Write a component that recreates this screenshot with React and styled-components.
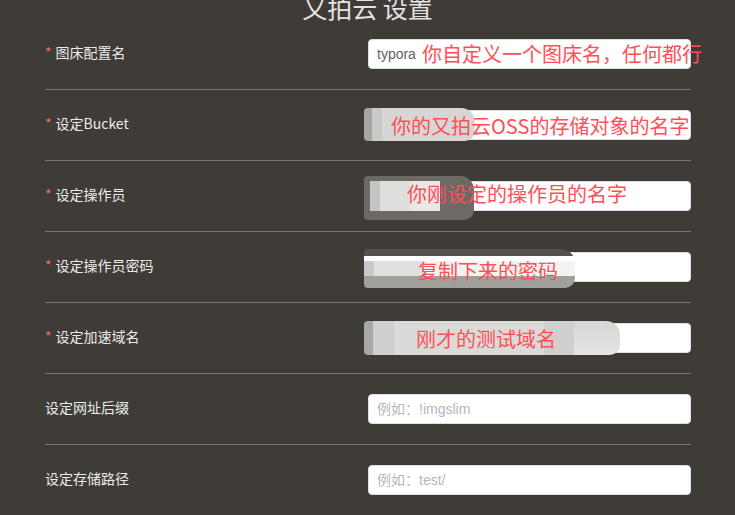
import React from 'react';
import styled, { createGlobalStyle } from 'styled-components';

const GlobalStyle = createGlobalStyle`
  html, body {
    margin: 0;
    padding: 0;
    background: #3f3b37;
    overflow: hidden;
  }
  body {
    font-family: "Noto Sans CJK SC", "Liberation Sans", sans-serif;
  }
`;

const Page = styled.div`
  width: 735px;
  height: 515px;
  overflow: hidden;
  background: #3f3b37;
`;

const Title = styled.h2`
  margin: -5px 0 0;
  height: 24px;
  line-height: 25px;
  font-size: 25px;
  font-weight: normal;
  color: #e3e3e3;
  text-align: center;
`;

const Form = styled.div`
  margin: 0 44px 0 45px;
`;

const Row = styled.div`
  position: relative;
  display: flex;
  justify-content: space-between;
  align-items: center;
  padding: 20px 0;
  border-bottom: 1px solid #7a7672;
`;

const Label = styled.label`
  font-size: 14px;
  line-height: 26px;
  margin-bottom: 4px;
  color: #ebebeb;
`;

const Star = styled.span`
  color: #f56c6c;
  margin-right: 4px;
`;

const Input = styled.input`
  box-sizing: border-box;
  width: 323px;
  height: 30px;
  padding: 0 8px;
  border: 1px solid #dcdfe6;
  border-radius: 4px;
  background: #fff;
  font-family: "Liberation Sans", "Noto Sans CJK SC", sans-serif;
  font-size: 14px;
  color: #606266;
  outline: none;
  &::placeholder {
    color: #b4b7bd;
  }
`;

const Note = styled.span`
  position: absolute;
  left: ${p => p.left}px;
  top: calc(50% + ${p => p.dy}px);
  transform: translateY(-50%);
  font-size: 20px;
  line-height: 24px;
  color: #ff4f57;
  white-space: nowrap;
  pointer-events: none;
`;

const Smudge = styled.div`
  position: absolute;
  left: 319px;
  top: ${p => p.top}px;
  width: ${p => p.w}px;
  height: ${p => p.h}px;
  border-radius: 4px 14px 10px 4px;
  background: ${p => p.bg};
  filter: blur(0.6px);
`;

const fields = [
  { label: '图床配置名', required: true, value: 'typora', note: { text: '你自定义一个图床名，任何都行', left: 377, dy: 0 } },
  {
    label: '设定Bucket', required: true, note: { text: '你的又拍云OSS的存储对象的名字', left: 346, dy: 1 },
    smudge: { top: 18, w: 111, h: 33, bg: 'linear-gradient(90deg, #a6a6a3 0 8px, #c9c9c7 8px 18px, #d6d6d4 18px 100%)' },
  },
  {
    label: '设定操作员', required: true, note: { text: '你刚设定的操作员的名字', left: 362, dy: -2 },
    smudge: { top: 15, w: 110, h: 44, bg: 'linear-gradient(90deg, #c4c4c2 0 10px, #dededc 10px 40px, #e8e8e6 40px) 6px 5px / 70px 30px no-repeat, #6d6a66' },
  },
  {
    label: '设定操作员密码', required: true, note: { text: '复制下来的密码', left: 373, dy: 4 },
    smudge: { top: 17, w: 211, h: 39, bg: 'linear-gradient(180deg, transparent 0 7px, #fff 7px 12px, transparent 12px) , linear-gradient(90deg, #c8c8c6 0 10px, #e0e0de 10px 60px, #f3f3f1 60px 100%) 0 7px / 100% 20px no-repeat, linear-gradient(180deg, #56524d 0 7px, #a19f9b 27px)' },
  },
  {
    label: '设定加速域名', required: true, note: { text: '刚才的测试域名', left: 371, dy: 1 },
    smudge: { top: 18, w: 256, h: 34, bg: 'linear-gradient(90deg, #a8a8a5 0 9px, #cfcfcd 9px 30px, #dadad8 30px 180px, #cfcfcd 180px 210px, transparent 210px), linear-gradient(180deg, #d6d6d4, #e4e4e2)' },
  },
  { label: '设定网址后缀', placeholder: '例如：!imgslim' },
  { label: '设定存储路径', placeholder: '例如：test/' },
];

const App = () => (
  <Page>
    <GlobalStyle />
    <Title>又拍云 设置</Title>
    <Form>
      {fields.map(f => (
        <Row key={f.label}>
          <Label>
            {f.required && <Star>*</Star>}
            {f.label}
          </Label>
          <Input defaultValue={f.value} placeholder={f.placeholder} readOnly />
          {f.smudge && <Smudge top={f.smudge.top} w={f.smudge.w} h={f.smudge.h} bg={f.smudge.bg} />}
          {f.note && <Note left={f.note.left} dy={f.note.dy}>{f.note.text}</Note>}
        </Row>
      ))}
    </Form>
  </Page>
);

export default App;
